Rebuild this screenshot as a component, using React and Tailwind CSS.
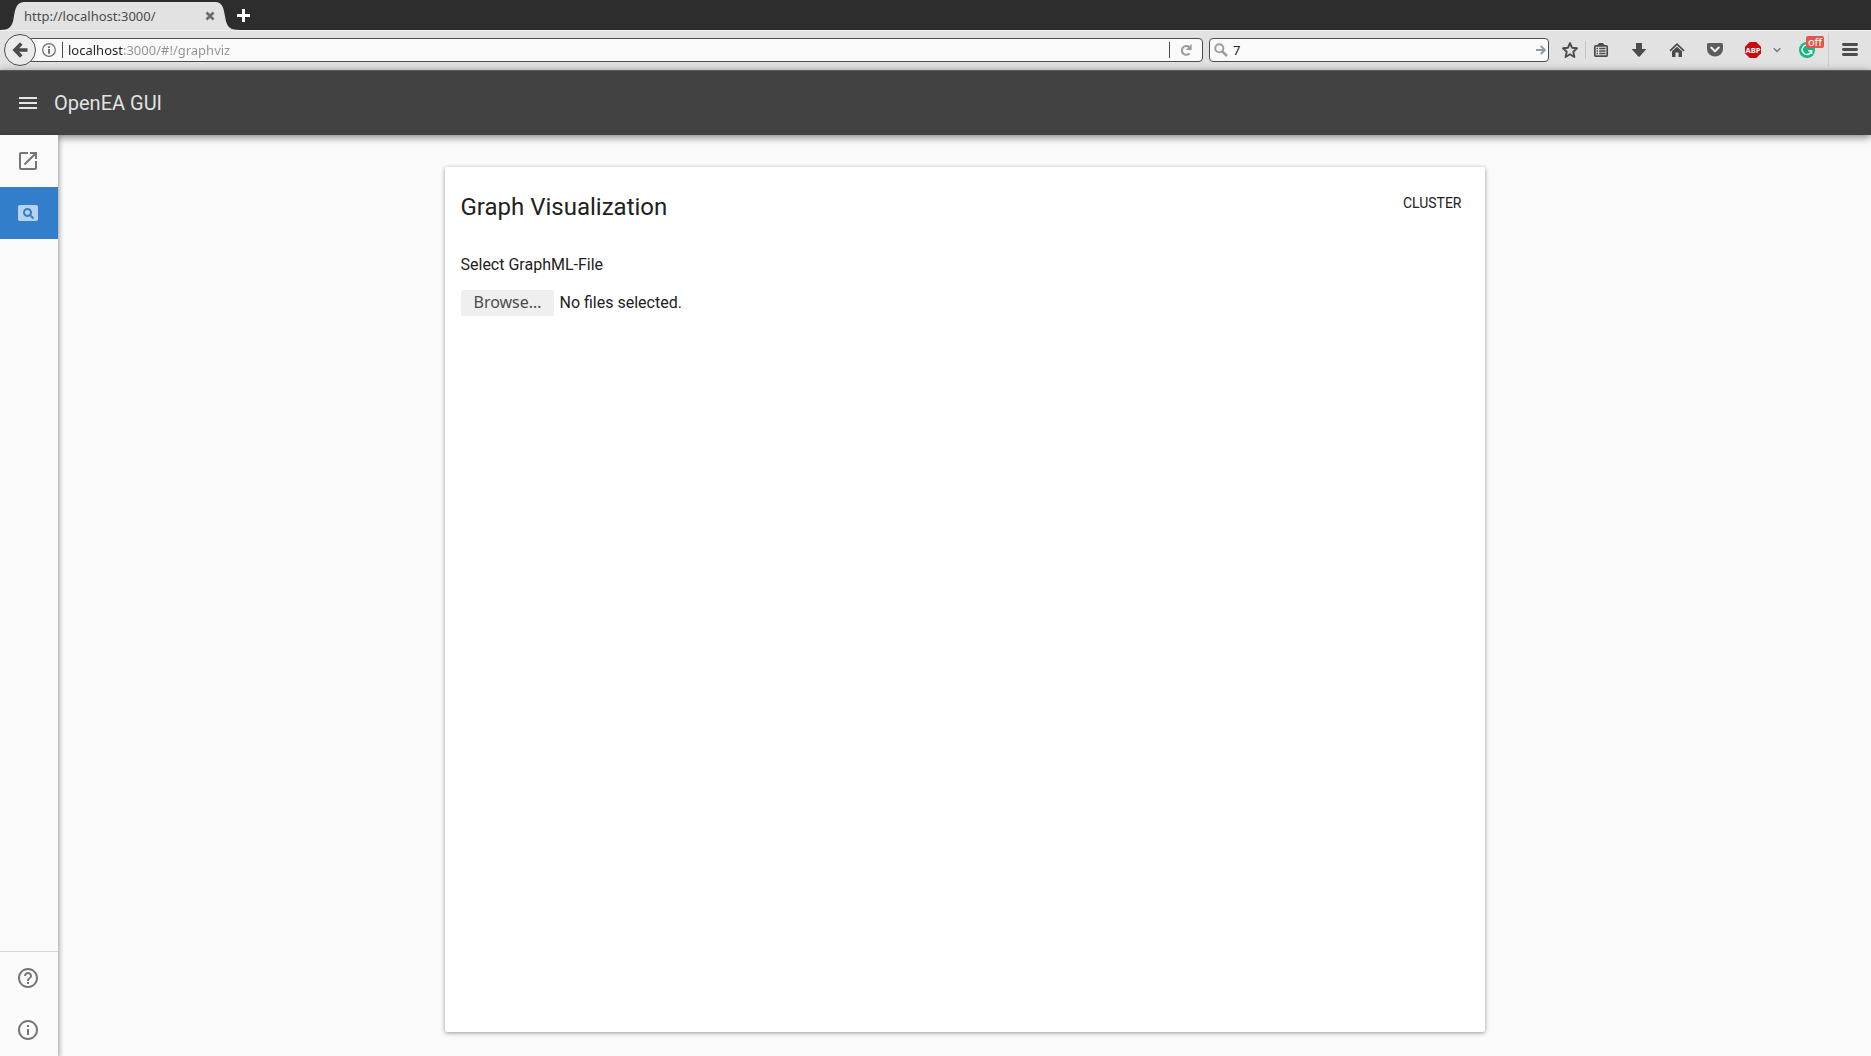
import React from "react";
import { MdMenu, MdOpenInNew, MdPageview, MdHelpOutline, MdInfoOutline } from "react-icons/md";

function Tab() {
  return (
    <div className="flex items-end h-7">
      <svg className="w-6 h-7 shrink-0" viewBox="0 0 24 28" fill="#e2e2e2" aria-hidden="true">
        <path d="M0 28C9 28 12 25 13.500 17C15.500 6 16 0 26 0V28Z" />
      </svg>
      <div className="flex items-center justify-between w-48 h-7 bg-[#e2e2e2]">
        <span className="text-[13px] leading-4 text-[#4c4c4c]">http://localhost:3000/</span>
        <button type="button" aria-label="Close tab" className="w-3 h-3 text-[#6a6a6a]">
          <svg viewBox="0 0 12 12" stroke="currentColor" strokeWidth="2.600" aria-hidden="true">
            <path d="M2.500 2.500L9.500 9.500M9.500 2.500L2.500 9.500" />
          </svg>
        </button>
      </div>
      <svg className="w-6 h-7 shrink-0" viewBox="0 0 24 28" fill="#e2e2e2" aria-hidden="true">
        <path d="M24 28C14 28 11 25 9.500 17C7.500 6 7 0 -2 0V28Z" />
      </svg>
    </div>
  );
}

function ToolButton({ label, children, className = "w-[38px]" }) {
  return (
    <button type="button" aria-label={label} className={`flex items-center justify-center h-8 shrink-0 text-[#4c4c4c] ${className}`}>
      {children}
    </button>
  );
}

function BrowserToolbar() {
  return (
    <div className="flex items-center h-10 bg-[#e2e2e2] shadow-[inset_0_1px_0_#f0f0f0] pl-1">
      <button
        type="button"
        aria-label="Back"
        className="relative z-10 flex items-center justify-center w-8 h-8 shrink-0 rounded-full border border-[#4c4c4c] bg-[#ebebeb] text-[#4c4c4c]"
      >
        <svg className="w-4 h-4" viewBox="0 0 16 16" fill="none" stroke="currentColor" strokeWidth="3.600" aria-hidden="true">
          <path d="M9.300 1.500L3 8L9.300 14.500M3 8H15.500" />
        </svg>
      </button>
      <div className="flex flex-1 items-center h-6 -ml-2 pl-[13px] border border-[#4c4c4c] rounded-sm bg-[#fafafa]">
        <button type="button" aria-label="Site information" className="w-[14px] h-[14px] shrink-0 text-[#6b6b6b]">
          <svg viewBox="0 0 14 14" fill="none" stroke="currentColor" aria-hidden="true">
            <circle cx="7" cy="7" r="6.300" strokeWidth="1.200" />
            <path d="M7 6V10.700M7 3.200V5" strokeWidth="1.900" />
          </svg>
        </button>
        <span className="w-px h-4 ml-[6px] mr-[5px] bg-[#4c4c4c]" />
        <input
          type="text"
          aria-label="Address"
          defaultValue="localhost:3000/#!/graphviz"
          className="flex-1 min-w-0 h-5 text-[13px] text-transparent bg-clip-text bg-[linear-gradient(90deg,#222_55px,#929292_55px)] outline-none"
        />
        <span className="w-px h-4 bg-[#4c4c4c]" />
        <button type="button" aria-label="Reload" className="flex items-center justify-center w-8 h-5 text-[#8f9ba8]">
          <svg className="w-3 h-3" viewBox="0 0 12 12" aria-hidden="true">
            <path d="M9.300 3.200A4.400 4.400 0 1 0 9.600 9.300" fill="none" stroke="currentColor" strokeWidth="2" />
            <path d="M11.600 0V6H5.800Z" fill="currentColor" />
          </svg>
        </button>
      </div>
      <div className="flex items-center w-[340px] h-6 ml-[6px] pl-1 pr-0.5 border border-[#4c4c4c] rounded-sm bg-[#fafafa]">
        <svg className="w-[14px] h-[14px] shrink-0 text-[#9b9b9b]" viewBox="0 0 14 14" fill="none" stroke="currentColor" aria-hidden="true">
          <circle cx="5.300" cy="5.300" r="4.100" strokeWidth="1.900" />
          <path d="M8.300 8.300L13 13" strokeWidth="2.500" />
        </svg>
        <input type="text" aria-label="Search" defaultValue="7" className="flex-1 min-w-0 h-5 ml-[5px] text-[13px] text-[#222] outline-none" />
        <button type="button" aria-label="Go" className="w-[10px] h-[10px] text-[#8f9ba8]">
          <svg viewBox="0 0 10 10" fill="none" stroke="currentColor" strokeWidth="2" aria-hidden="true">
            <path d="M0 5H8.500M4.800 1L8.800 5L4.800 9" />
          </svg>
        </button>
      </div>
      <ToolButton label="Bookmark this page" className="w-9 pl-1.5">
        <svg className="w-4 h-4" viewBox="0 0 16 16" fill="none" stroke="currentColor" strokeWidth="1.900" strokeLinejoin="round" aria-hidden="true">
          <path d="M8 1.100L10 5.700L15 6.300L11.300 9.700L12.400 15L8 12.300L3.600 15L4.700 9.700L1 6.300L6 5.700Z" />
        </svg>
      </ToolButton>
      <span className="w-px h-[18px] bg-[#c6c6c6]" />
      <ToolButton label="Show bookmarks" className="w-[30px]">
        <svg className="w-4 h-4" viewBox="0 0 16 16" fill="none" stroke="currentColor" aria-hidden="true">
          <rect x="1.800" y="3.800" width="12.400" height="10.400" rx="1" strokeWidth="1.700" />
          <path d="M4.500 3.500L6 1.500H10L11.500 3.500Z" fill="currentColor" />
          <path d="M3.500 6.500H5M6.200 6.500H12.500M3.500 9H5M6.200 9H12.500M3.500 11.500H5M6.200 11.500H12.500" strokeWidth="1.300" />
        </svg>
      </ToolButton>
      <ToolButton label="Downloads" className="w-[46px]">
        <svg className="w-4 h-4" viewBox="0 0 16 16" fill="currentColor" aria-hidden="true">
          <path d="M5 1.500Q5 1 5.500 1H10.500Q11 1 11 1.500V7H14.500Q15.500 7 14.800 7.800L8.700 14.500Q8 15.200 7.300 14.500L1.200 7.800Q.5 7 1.500 7H5Z" />
        </svg>
      </ToolButton>
      <ToolButton label="Home" className="w-[30px]">
        <svg className="w-4 h-4" viewBox="0 0 16 16" aria-hidden="true">
          <path d="M1 8.800L8 2.200L15 8.800" fill="none" stroke="currentColor" strokeWidth="1.700" />
          <path d="M3 9.300L8 4.800L13 9.300V14.500Q13 15 12.500 15H9.500V10.500H6.500V15H3.500Q3 15 3 14.500Z" fill="currentColor" />
        </svg>
      </ToolButton>
      <ToolButton label="Save to Pocket" className="w-[46px]">
        <svg className="w-4 h-4" viewBox="0 0 16 16" aria-hidden="true">
          <path d="M1.500 1H14.500Q16 1 16 2.500V7A8 7.500 0 0 1 0 7V2.500Q0 1 1.500 1Z" fill="#5c5c5c" />
          <path d="M4.200 5.500L8 9.200L11.800 5.500" fill="none" stroke="#f2f2f2" strokeWidth="2" strokeLinecap="round" strokeLinejoin="round" />
        </svg>
      </ToolButton>
      <ToolButton label="Adblock Plus" className="w-[30px]">
        <svg className="w-4 h-4" viewBox="0 0 16 16" aria-hidden="true">
          <path d="M4.700 0H11.300L16 4.700V11.300L11.300 16H4.700L0 11.300V4.700Z" fill="#c70d0d" />
          <text x="8" y="10.800" textAnchor="middle" fill="#fff" fontFamily="Open Sans, sans-serif" fontWeight="700" fontSize="7.500">ABP</text>
        </svg>
      </ToolButton>
      <ToolButton label="Adblock Plus menu" className="w-[18px]">
        <svg className="w-2 h-2" viewBox="0 0 8 8" fill="none" stroke="#7a7a7a" strokeWidth="1.400" aria-hidden="true">
          <path d="M.7 2.200L4 5.600L7.300 2.200" />
        </svg>
      </ToolButton>
      <button type="button" aria-label="Grammarly, off" className="relative flex items-center justify-center w-[42px] h-8">
        <svg className="w-4 h-4" viewBox="0 0 16 16" aria-hidden="true">
          <circle cx="8" cy="8" r="8" fill="#11b982" />
          <path d="M11.200 4.200A4.800 4.800 0 1 0 12.600 8.800H9.300M12.600 8.800V12" fill="none" stroke="#fff" strokeWidth="1.600" />
        </svg>
        <span className="absolute top-0.5 right-1 w-[18px] h-3 rounded-xs bg-[#e2574c] text-[11px] leading-[11px] text-white">off</span>
      </button>
      <span className="w-px h-[34px] bg-[#cdcdcd]" />
      <ToolButton label="Open menu" className="w-[42px]">
        <svg className="w-4 h-4" viewBox="0 0 16 16" fill="none" stroke="currentColor" strokeWidth="2.800" strokeLinecap="round" aria-hidden="true">
          <path d="M1.400 2.500H14.600M1.400 7.500H14.600M1.400 12.500H14.600" />
        </svg>
      </ToolButton>
    </div>
  );
}

function NavItem({ label, icon: Icon, active }) {
  return (
    <a
      href="#"
      aria-label={label}
      className={
        active
          ? "flex items-center h-[52px] pl-4 bg-[#337ecb] text-white/65"
          : "flex items-center h-[52px] pl-4 text-[#757575]"
      }
    >
      <Icon size={24} />
    </a>
  );
}

export default function App() {
  return (
    <div className="flex flex-col min-h-screen bg-[#fafafa] font-['Roboto',sans-serif] text-[#212121]">
      <div className="font-['Noto_Sans',sans-serif]">
        <div className="flex items-end h-[30px] bg-[#2d2d2d]">
          <Tab />
          <button type="button" aria-label="New tab" className="w-[13px] h-[13px] -ml-[3px] mb-2 text-white">
            <svg viewBox="0 0 13 13" stroke="currentColor" strokeWidth="3" aria-hidden="true">
              <path d="M6.500 0V13M0 6.500H13" />
            </svg>
          </button>
        </div>
        <BrowserToolbar />
      </div>

      <header className="relative z-20 flex items-center h-[65px] pl-4 gap-[14px] bg-[#424242] border-t border-[#5a5a5a] text-white/87 shadow-[0_2px_8px_rgba(0,0,0,0.5)]">
        <button type="button" aria-label="Toggle menu">
          <MdMenu size={24} />
        </button>
        <h1 className="text-xl font-normal">OpenEA GUI</h1>
      </header>

      <div className="flex flex-1">
        <nav className="relative z-20 flex flex-col justify-between w-[58px] shrink-0 bg-[#fafafa] shadow-[1px_2px_5px_rgba(0,0,0,0.4)]">
          <div>
            <NavItem label="Open" icon={MdOpenInNew} />
            <NavItem label="Graph visualization" icon={MdPageview} active />
          </div>
          <div className="border-t border-[#d8d8d8]">
            <NavItem label="Help" icon={MdHelpOutline} />
            <NavItem label="About" icon={MdInfoOutline} />
          </div>
        </nav>

        <main className="flex flex-1 justify-center pt-8 pb-6">
          <section className="w-full max-w-[1040px] p-4 rounded-xs bg-white shadow-[0_1px_4px_rgba(0,0,0,0.4)]">
            <div className="flex items-start justify-between">
              <h2 className="pt-2 text-2xl leading-8">Graph Visualization</h2>
              <button type="button" className="px-[7px] text-sm leading-10">CLUSTER</button>
            </div>
            <label htmlFor="graphml" className="block mt-[30px] text-base leading-6">Select GraphML-File</label>
            <label htmlFor="graphml" className="flex items-center mt-[13px] gap-[5px] text-base leading-6">
              <span className="px-[13px] h-[26px] rounded-xs bg-[#efefef] font-['Noto_Sans',sans-serif] text-[#4c4c4c]">Browse…</span>
              <span>No files selected.</span>
              <input id="graphml" type="file" multiple className="sr-only" />
            </label>
          </section>
        </main>
      </div>
    </div>
  );
}
